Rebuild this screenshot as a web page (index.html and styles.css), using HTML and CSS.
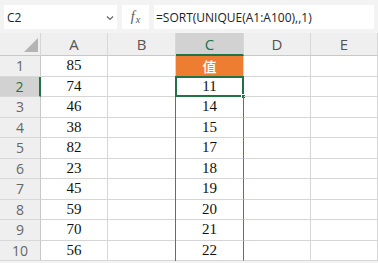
FILE: index.html
```html
<!DOCTYPE html>
<html>
<head>
<meta charset="utf-8">
<link rel="stylesheet" href="styles.css">
</head>
<body>
<div class="app">
  <div class="fbar">
    <div class="namebox"><span>C2</span><svg class="chev" width="8" height="6" viewBox="0 0 8 6"><path d="M1 1.5 L4 4.5 L7 1.5" fill="none" stroke="#666" stroke-width="1.2"/></svg></div>
    <div class="fxbox"><i>f</i><span class="x">x</span></div>
    <div class="finput">=SORT(UNIQUE(A1:A100),,1)</div>
  </div>
  <div class="sheet">
    <div class="corner"><span class="tri"></span></div>
    <div class="ch">A</div>
    <div class="ch">B</div>
    <div class="ch sel">C</div>
    <div class="ch">D</div>
    <div class="ch">E</div>

    <div class="rh">1</div><div class="c">85</div><div class="c"></div><div class="c head">值</div><div class="c"></div><div class="c"></div>
    <div class="rh sel">2</div><div class="c">74</div><div class="c"></div><div class="c active">11<span class="handle"></span></div><div class="c"></div><div class="c"></div>
    <div class="rh">3</div><div class="c">46</div><div class="c"></div><div class="c spill">14</div><div class="c"></div><div class="c"></div>
    <div class="rh">4</div><div class="c">38</div><div class="c"></div><div class="c spill">15</div><div class="c"></div><div class="c"></div>
    <div class="rh">5</div><div class="c">82</div><div class="c"></div><div class="c spill">17</div><div class="c"></div><div class="c"></div>
    <div class="rh">6</div><div class="c">23</div><div class="c"></div><div class="c spill">18</div><div class="c"></div><div class="c"></div>
    <div class="rh">7</div><div class="c">45</div><div class="c"></div><div class="c spill">19</div><div class="c"></div><div class="c"></div>
    <div class="rh">8</div><div class="c">59</div><div class="c"></div><div class="c spill">20</div><div class="c"></div><div class="c"></div>
    <div class="rh">9</div><div class="c">70</div><div class="c"></div><div class="c spill">21</div><div class="c"></div><div class="c"></div>
    <div class="rh">10</div><div class="c">56</div><div class="c"></div><div class="c spill">22</div><div class="c"></div><div class="c"></div>
  </div>
</div>
</body>
</html>
```

FILE: styles.css
```css
* { box-sizing: border-box; }
html, body { margin: 0; padding: 0; }
body { background: #f3f3f3; width: 378px; height: 263px; overflow: hidden; }
.app { width: 378px; height: 263px; overflow: hidden; }

.fbar {
  height: 33px;
  display: flex;
  padding: 5px 4px 0 4px;
  gap: 5px;
  font-family: "Open Sans", "Noto Sans", sans-serif;
  background: #f3f3f3;
}
.namebox {
  width: 113px; height: 24px; background: #fff;
  display: flex; align-items: center; justify-content: space-between;
  padding: 0 3px 0 3px; font-size: 12px; color: #222;
}
.chev { margin-top: 1px; }
.fxbox {
  width: 27px; height: 24px; background: #fff;
  display: flex; align-items: center; justify-content: center;
  font-family: "Liberation Serif", serif; color: #555; font-size: 14px;
}
.fxbox i { font-style: italic; }
.fxbox .x { font-style: italic; font-size: 10px; margin-top: 4px; margin-left: 1px; }
.finput {
  flex: 1; height: 24px; background: #fff;
  display: flex; align-items: center; padding-left: 2px;
  font-size: 12px; color: #222;
}

.sheet {
  display: grid;
  grid-template-columns: 41px 67px 68px 68px 67px 67px;
  grid-template-rows: 23px repeat(10, 20.5px);
  background: #fff;
}
.corner {
  background: #efefef; position: relative;
  border-right: 1px solid #d6d6d6; border-bottom: 1px solid #c8c8c8;
}
.tri {
  position: absolute; right: 2px; bottom: 3px;
  width: 0; height: 0;
  border-left: 14px solid transparent;
  border-bottom: 14px solid #b4b4b4;
}
.ch {
  background: #efefef;
  border-right: 1px solid #d8d8d8;
  border-bottom: 1px solid #c8c8c8;
  display: flex; align-items: center; justify-content: center;
  font-family: "Open Sans", "Noto Sans", sans-serif; font-size: 15px; color: #555;
}
.ch.sel { background: #d2d2d2; color: #217346; border-bottom: 2px solid #217346; }
.rh {
  background: #efefef;
  border-right: 1px solid #c8c8c8;
  border-bottom: 1px solid #d8d8d8;
  display: flex; align-items: center; justify-content: center;
  font-family: "Open Sans", "Noto Sans", sans-serif; font-size: 14px; color: #666;
}
.rh.sel { background: #d2d2d2; color: #217346; border-right: 2px solid #217346; }
.c {
  border-right: 1px solid #d6d6d6;
  border-bottom: 1px solid #d6d6d6;
  display: flex; align-items: center; justify-content: center;
  font-family: "Liberation Serif", "Times New Roman", serif; font-size: 15px; color: #111;
  position: relative;
}
.c.head {
  background: #ed7d31; color: #fff;
  font-family: "Noto Sans CJK TC", "Noto Sans CJK SC", sans-serif; font-size: 14px; font-weight: 500;
}
.c.active {
  border: 2px solid #217346;
  margin-left: -1px; margin-top: -1px;
}
.handle {
  position: absolute; right: -4px; bottom: -4px;
  width: 5px; height: 5px; background: #217346;
  border: 1px solid #fff;
}
.c.spill { border-right: 1px solid #3a6fd6; }
.c.spill::before {
  content: ""; position: absolute; left: -1px; top: 0; bottom: -1px;
  width: 1px; background: #3a6fd6;
}
```
